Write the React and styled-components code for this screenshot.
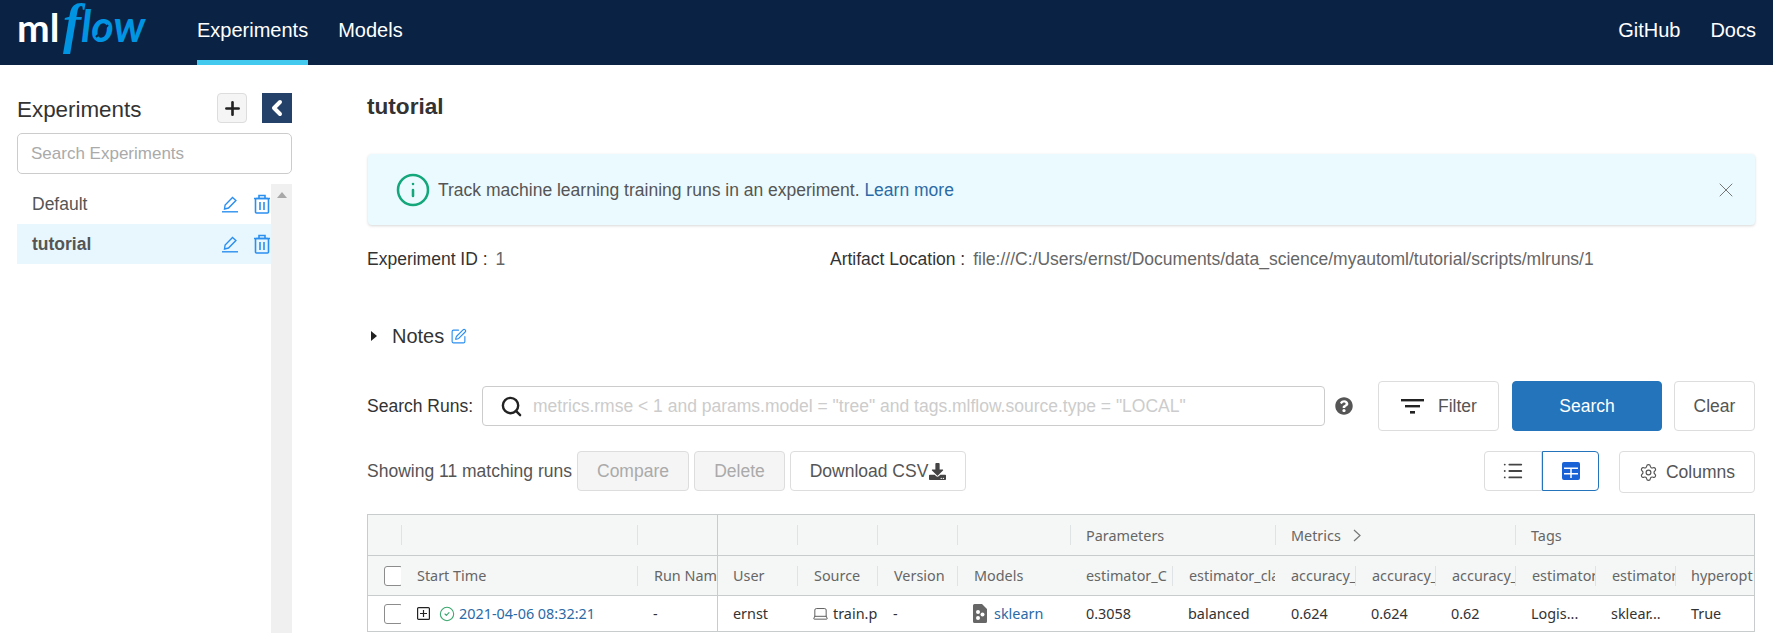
import React from 'react'
import styled, { createGlobalStyle } from 'styled-components'
import { Plus, ChevronLeft, SquarePen, Search, Info, X, List, Settings, CircleCheck, Laptop } from 'lucide-react'
import { FaDownload, FaQuestionCircle } from 'react-icons/fa'

const GlobalStyle = createGlobalStyle`
  html, body { margin: 0; padding: 0; height: 633px; overflow: hidden; background: #fff; }
  body { font-family: "Liberation Sans", Arial, sans-serif; color: #333; }
  * { box-sizing: border-box; }
`

// header
const Header = styled.header`
  height: 65px;
  background: #0a2344;
  display: flex; align-items: stretch;
  padding: 0 17px;
`
const Logo = styled.svg`
  width: 150px; height: 65px;
  flex-shrink: 0;
  margin-right: 30px;
`
const NavItem = styled.a`
  display: flex; align-items: center;
  height: 65px;
  margin-right: 30px;
  font-size: 20px;
  color: #fff;
  border-bottom: 5px solid ${(props) => (props.$active ? '#43c9ed' : 'transparent')};
  &:last-child { margin-right: 0; }
`
const NavSpacer = styled.div`
  flex: 1;
`

// page
const Body = styled.div`
  height: 568px;
  display: flex;
  overflow: hidden;
`
const Sidebar = styled.aside`
  width: 309px; flex-shrink: 0;
  padding: 28px 17px 0;
  display: flex; flex-direction: column;
`
const SideHead = styled.div`
  display: flex; align-items: center;
  height: 30px;
`
const SideTitle = styled.div`
  flex: 1;
  font-size: 22.4px;
  padding-top: 4px;
  color: #333;
`
const AddBtn = styled.button`
  width: 30px; height: 30px;
  padding: 0;
  display: flex; justify-content: center; align-items: center;
  background: #f5f5f5;
  border: 1px solid #ddd;
  border-radius: 4px;
  color: #222;
  margin-right: 15px;
`
const CollapseBtn = styled.button`
  width: 30px; height: 30px;
  padding: 0;
  display: flex; justify-content: center; align-items: center;
  background: #24416a;
  border: 0;
  color: #fff;
`
const SideSearch = styled.input`
  width: 275px; height: 41px;
  margin-top: 10px;
  padding: 0 13px;
  border: 1px solid #ccc;
  border-radius: 5px;
  font-family: inherit;
  font-size: 17px;
  &::placeholder { color: #aaa; }
`
const ListWrap = styled.div`
  flex: 1;
  display: flex;
  margin-top: 10px;
`
const ExperimentList = styled.div`
  flex: 1;
`
const ExperimentRow = styled.div`
  height: 40px;
  display: flex; align-items: center;
  padding: 0 0 0 15px;
  font-size: 17.5px;
  font-weight: ${(props) => (props.$active ? 'bold' : 'normal')};
  background: ${(props) => (props.$active ? '#e8f7fd' : 'transparent')};
  color: #555;
`
const ExperimentName = styled.span`
  flex: 1;
`
const RowIcons = styled.span`
  display: flex; align-items: center;
  color: #2b8fef;
  gap: 15px;
`
const ScrollTrack = styled.div`
  width: 21px;
  background: #f0f0f0;
  display: flex; justify-content: center;
  padding-top: 8px;
`
const ScrollArrow = styled.div`
  width: 0; height: 0;
  border-left: 5px solid transparent;
  border-right: 5px solid transparent;
  border-bottom: 6px solid #a8a8a8;
`

const Main = styled.main`
  flex: 1;
  min-width: 0;
  padding: 27px 18px 0 58px;
`
const Title = styled.h1`
  margin: 0;
  height: 30px;
  line-height: 30px;
  font-size: 22.6px;
  color: #333;
`
const Alert = styled.div`
  margin: 32px 0 0 1px;
  height: 71px;
  display: flex; align-items: center;
  background: #ebfafe;
  border-radius: 4px;
  box-shadow: 0 1px 3px rgba(0, 0, 0, 0.16);
  padding: 0 17px 0 27px;
  font-size: 17.5px;
  color: #555;
`
const AlertIcon = styled.span`
  display: flex;
  color: #14a77c;
  margin-right: 7px;
`
const AlertText = styled.span`
  flex: 1;
  padding-top: 2px;
`
const LinkText = styled.a`
  color: #2b6aa6;
`
const CloseIcon = styled.span`
  display: flex;
  color: #777;
`
const InfoLine = styled.div`
  margin-top: 22px;
  height: 24px;
  display: grid;
  grid-template-columns: 463px 1fr;
  font-size: 17.5px;
  line-height: 24px;
`
const InfoPair = styled.div`
  display: flex;
  color: #333;
`
const InfoValue = styled.span`
  color: #666;
  margin-left: 8px;
`
const NotesLine = styled.div`
  margin-top: 50px;
  height: 30px;
  display: flex; align-items: center;
  font-size: 20px;
  color: #333;
`
const Caret = styled.span`
  width: 0; height: 0;
  margin: 0 15px 0 4px;
  border-top: 5px solid transparent;
  border-bottom: 5px solid transparent;
  border-left: 6px solid #222;
`
const NotesEdit = styled.span`
  display: flex;
  margin-left: 6px;
  color: #2b8fef;
`
const SearchLine = styled.div`
  margin-top: 30px;
  height: 50px;
  display: flex; align-items: center;
`
const FieldLabel = styled.label`
  width: 115px;
  font-size: 17.5px;
  color: #333;
`
const SearchBox = styled.div`
  width: 843px; height: 40px;
  display: flex; align-items: center;
  border: 1px solid #ccc;
  border-radius: 4px;
  padding-left: 17px;
  color: #222;
`
const SearchInput = styled.input`
  flex: 1;
  margin-left: 10px;
  border: 0; outline: 0; padding: 0;
  font-family: inherit;
  font-size: 17.5px;
  &::placeholder { color: #ccc; }
`
const HelpIcon = styled.span`
  display: flex;
  margin: 0 25px 0 10px;
  color: #555;
`
const Btn = styled.button`
  height: ${(props) => props.$h || 40}px;
  width: ${(props) => props.$w}px;
  margin-left: ${(props) => props.$ml || 0}px;
  padding: 0;
  display: flex; justify-content: center; align-items: center;
  gap: ${(props) => props.$gap || 0}px;
  font-family: inherit;
  font-size: 17.5px;
  color: ${(props) => (props.$disabled ? '#aaa' : props.$primary ? '#fff' : '#555')};
  background: ${(props) => (props.$disabled ? '#f5f5f5' : props.$primary ? '#2374bb' : '#fff')};
  border: 1px solid ${(props) => (props.$primary ? '#2374bb' : '#ddd')};
  border-radius: 4px;
`
const ActionLine = styled.div`
  margin-top: 20px;
  height: 42px;
  display: flex; align-items: flex-start;
`
const Showing = styled.div`
  width: 210px;
  height: 40px;
  line-height: 40px;
  font-size: 17.5px;
  white-space: nowrap;
  color: #555;
`
const ActionSpacer = styled.div`
  flex: 1;
`
const ViewToggle = styled.button`
  width: ${(props) => props.$w}px; height: 40px;
  padding: 0;
  display: flex; justify-content: center; align-items: center;
  background: #fff;
  color: #444;
  border: 1px solid ${(props) => (props.$active ? '#2374bb' : '#ddd')};
  border-radius: ${(props) => (props.$active ? '0 4px 4px 0' : '4px 0 0 4px')};
`

// runs table
const COLUMNS = '33px 236px 80px 80px 80px 80px 113px 102px 103px 80px 80px 80px 80px 80px 79px'

const Table = styled.div`
  position: relative;
  margin-top: 21px;
  width: 1388px;
  border: 1px solid #c8cccc;
  border-bottom: 0;
  font-family: "Noto Sans", "Open Sans", sans-serif;
  font-size: 14.4px;
`
const PinDivider = styled.div`
  position: absolute;
  top: 0; bottom: 0; left: 349px;
  width: 1px;
  background: #c8cccc;
`
const Row = styled.div`
  display: grid;
  grid-template-columns: ${COLUMNS};
  height: ${(props) => props.$h}px;
  align-items: center;
  background: ${(props) => (props.$head ? '#f5f7f7' : '#fff')};
  border-bottom: 1px solid #c8cccc;
  color: ${(props) => (props.$head ? '#666' : '#333')};
`
const Cell = styled.div`
  grid-column: span ${(props) => props.$span || 1};
  display: flex; align-items: center;
  height: 20px;
  padding-left: ${(props) => props.$pl ?? 16}px;
  overflow: hidden;
  white-space: nowrap;
  border-left: ${(props) => (props.$line ? '1px solid #dfe3e3' : '0')};
`
const RunLink = styled.a`
  color: #2b6aa6;
`
const CheckBox = styled.span`
  width: 19px; height: 20px;
  flex-shrink: 0;
  background: #fff;
  border: 1px solid #8c8c8c;
  border-radius: 3px;
`
const Expander = styled.svg`
  width: 13px; height: 13px;
  flex-shrink: 0;
  margin-right: 9px;
`
const StatusIcon = styled.span`
  display: flex;
  color: #3aa76d;
  margin-right: 4px;
`
const SourceIcon = styled.span`
  display: flex;
  margin-right: 4px;
  color: #444;
`
const ModelIcon = styled.svg`
  width: 14px; height: 19px;
  flex-shrink: 0;
  margin-right: 7px;
`
const ChevronMark = styled.span`
  margin-left: 12px;
  display: flex;
`

const MlflowLogo = () => (
  <Logo viewBox="0 0 150 65">
    <text x="0" y="42" fontFamily="Lato, sans-serif" fontWeight="700" fontSize="39" fill="#fff">ml</text>
    <text x="46" y="42" fontFamily="Liberation Serif, serif" fontStyle="italic" fontWeight="700" fontSize="54" fill="#0194e2">f</text>
    <text x="64" y="42" fontFamily="Lato, sans-serif" fontStyle="italic" fontWeight="700" fontSize="43" fill="#0194e2">low</text>
    <path d="M79 37L91 25" stroke="#0a2344" strokeWidth="2" />
  </Logo>
)

const PenIcon = () => (
  <svg width="16" height="18" viewBox="0 0 16 18" fill="none" stroke="currentColor" strokeWidth="1.4">
    <path d="M2.500 14l.6-4L10.500 2.500l3.400 3L6.500 13z" />
    <path d="M0 16.800h16" />
  </svg>
)

const TrashIcon = () => (
  <svg width="18" height="20" viewBox="0 0 18 20" fill="none" stroke="currentColor" strokeWidth="1.6">
    <path d="M1 4.500h16M6 4.500V1.500h6v3" />
    <rect x="2.500" y="4.500" width="13" height="14.500" rx="1" />
    <path d="M7 8v8M11 8v8" />
  </svg>
)

const FilterIcon = () => (
  <svg width="24" height="20" viewBox="0 0 24 20" fill="#222">
    <rect x="1" y="3" width="23" height="2.400" />
    <rect x="5" y="9" width="15" height="2.400" />
    <rect x="10" y="15" width="5" height="2.600" />
  </svg>
)

const CompactIcon = () => (
  <svg width="18" height="18" viewBox="0 0 18 18">
    <rect width="18" height="18" rx="2" fill="#1a63d6" />
    <path d="M2 5.500h14v1.500H2zM2 11h14v1.500H2zM8.250 5.500h1.500V16h-1.500z" fill="#fff" />
  </svg>
)

const ModelGlyph = () => (
  <ModelIcon viewBox="0 0 14 19">
    <path d="M1.500 0H9l5 5v12.500a1.500 1.500 0 0 1-1.500 1.500h-11A1.500 1.500 0 0 1 0 17.500V1.500A1.500 1.500 0 0 1 1.500 0z" fill="#666" />
    <circle cx="5" cy="8" r="2" fill="#fff" />
    <circle cx="9.500" cy="10.500" r="2" fill="#fff" />
    <circle cx="5" cy="14" r="2" fill="#fff" />
  </ModelIcon>
)

const App = () => {
  const secondHead = [
    ['Source', 16, true], ['Version', 16, true], ['Models', 16, true],
    ['estimator_C', 16, false], ['estimator_cla', 16, true],
    ['accuracy_', 16, false], ['accuracy_', 16, true], ['accuracy_', 16, true],
    ['estimator', 16, true], ['estimator', 16, true], ['hyperopt', 15, true],
  ]
  const values = ['0.3058', 'balanced', '0.624', '0.624', '0.62', 'Logis...', 'sklear...', 'True']

  return (
    <>
      <GlobalStyle />
      <Header>
        <MlflowLogo />
        <NavItem $active>Experiments</NavItem>
        <NavItem>Models</NavItem>
        <NavSpacer />
        <NavItem>GitHub</NavItem>
        <NavItem>Docs</NavItem>
      </Header>
      <Body>
        <Sidebar>
          <SideHead>
            <SideTitle>Experiments</SideTitle>
            <AddBtn><Plus size={21} strokeWidth={3} /></AddBtn>
            <CollapseBtn><ChevronLeft size={24} strokeWidth={4} /></CollapseBtn>
          </SideHead>
          <SideSearch placeholder="Search Experiments" />
          <ListWrap>
            <ExperimentList>
              <ExperimentRow>
                <ExperimentName>Default</ExperimentName>
                <RowIcons><PenIcon /><TrashIcon /></RowIcons>
              </ExperimentRow>
              <ExperimentRow $active>
                <ExperimentName>tutorial</ExperimentName>
                <RowIcons><PenIcon /><TrashIcon /></RowIcons>
              </ExperimentRow>
            </ExperimentList>
            <ScrollTrack><ScrollArrow /></ScrollTrack>
          </ListWrap>
        </Sidebar>
        <Main>
          <Title>tutorial</Title>
          <Alert>
            <AlertIcon><Info size={36} strokeWidth={1.7} /></AlertIcon>
            <AlertText>Track machine learning training runs in an experiment. <LinkText>Learn more</LinkText></AlertText>
            <CloseIcon><X size={24} strokeWidth={1} /></CloseIcon>
          </Alert>
          <InfoLine>
            <InfoPair>Experiment ID :<InfoValue>1</InfoValue></InfoPair>
            <InfoPair>Artifact Location :<InfoValue>file:///C:/Users/ernst/Documents/data_science/myautoml/tutorial/scripts/mlruns/1</InfoValue></InfoPair>
          </InfoLine>
          <NotesLine>
            <Caret />Notes
            <NotesEdit><SquarePen size={17} strokeWidth={1.6} /></NotesEdit>
          </NotesLine>
          <SearchLine>
            <FieldLabel>Search Runs:</FieldLabel>
            <SearchBox>
              <Search size={23} strokeWidth={2.5} />
              <SearchInput placeholder={'metrics.rmse < 1 and params.model = "tree" and tags.mlflow.source.type = "LOCAL"'} />
            </SearchBox>
            <HelpIcon><FaQuestionCircle size={18} /></HelpIcon>
            <Btn $w={121} $h={50} $gap={14}><FilterIcon />Filter</Btn>
            <Btn $w={150} $h={50} $ml={13} $primary>Search</Btn>
            <Btn $w={81} $h={50} $ml={12}>Clear</Btn>
          </SearchLine>
          <ActionLine>
            <Showing>Showing 11 matching runs</Showing>
            <Btn $w={112} $disabled>Compare</Btn>
            <Btn $w={91} $ml={5} $disabled>Delete</Btn>
            <Btn $w={176} $ml={5} $gap={1}>Download CSV<FaDownload size={17} color="#444" /></Btn>
            <ActionSpacer />
            <ViewToggle $w={58}><List size={22} strokeWidth={2} /></ViewToggle>
            <ViewToggle $w={57} $active><CompactIcon /></ViewToggle>
            <Btn $w={136} $h={42} $ml={20} $gap={8}><Settings size={19} strokeWidth={1.5} />Columns</Btn>
          </ActionLine>
          <Table>
            <PinDivider />
            <Row $head $h={41}>
              <Cell />
              <Cell $line />
              <Cell $line />
              <Cell />
              <Cell $line />
              <Cell $line />
              <Cell $line />
              <Cell $span={2} $pl={15} $line>Parameters</Cell>
              <Cell $span={3} $pl={15} $line>Metrics<ChevronMark><svg width="8" height="13" viewBox="0 0 8 13" fill="none" stroke="#777" strokeWidth="1.2"><path d="M1 1l6 5.500-6 5.500" /></svg></ChevronMark></Cell>
              <Cell $span={3} $pl={15} $line>Tags</Cell>
            </Row>
            <Row $head $h={40}>
              <Cell><CheckBox /></Cell>
              <Cell>Start Time</Cell>
              <Cell $line>Run Nam</Cell>
              <Cell>User</Cell>
              {secondHead.map(([label, pl, line], i) => (
                <Cell key={i} $pl={pl} $line={line}>{label}</Cell>
              ))}
            </Row>
            <Row $h={36}>
              <Cell><CheckBox /></Cell>
              <Cell>
                <Expander viewBox="0 0 13 13" fill="none" stroke="#222" strokeWidth="1.2">
                  <rect x="0.600" y="0.600" width="11.800" height="11.800" rx="1" />
                  <path d="M6.500 3v7M3 6.500h7" />
                </Expander>
                <StatusIcon><CircleCheck size={16} strokeWidth={1.6} /></StatusIcon>
                <RunLink>2021-04-06 08:32:21</RunLink>
              </Cell>
              <Cell>-</Cell>
              <Cell>ernst</Cell>
              <Cell $pl={15}>
                <SourceIcon><Laptop size={17} strokeWidth={1.2} /></SourceIcon>train.p
              </Cell>
              <Cell>-</Cell>
              <Cell><ModelGlyph /><RunLink>sklearn</RunLink></Cell>
              {values.map((v, i) => (
                <Cell key={i}>{v}</Cell>
              ))}
            </Row>
          </Table>
        </Main>
      </Body>
    </>
  )
}

export default App
